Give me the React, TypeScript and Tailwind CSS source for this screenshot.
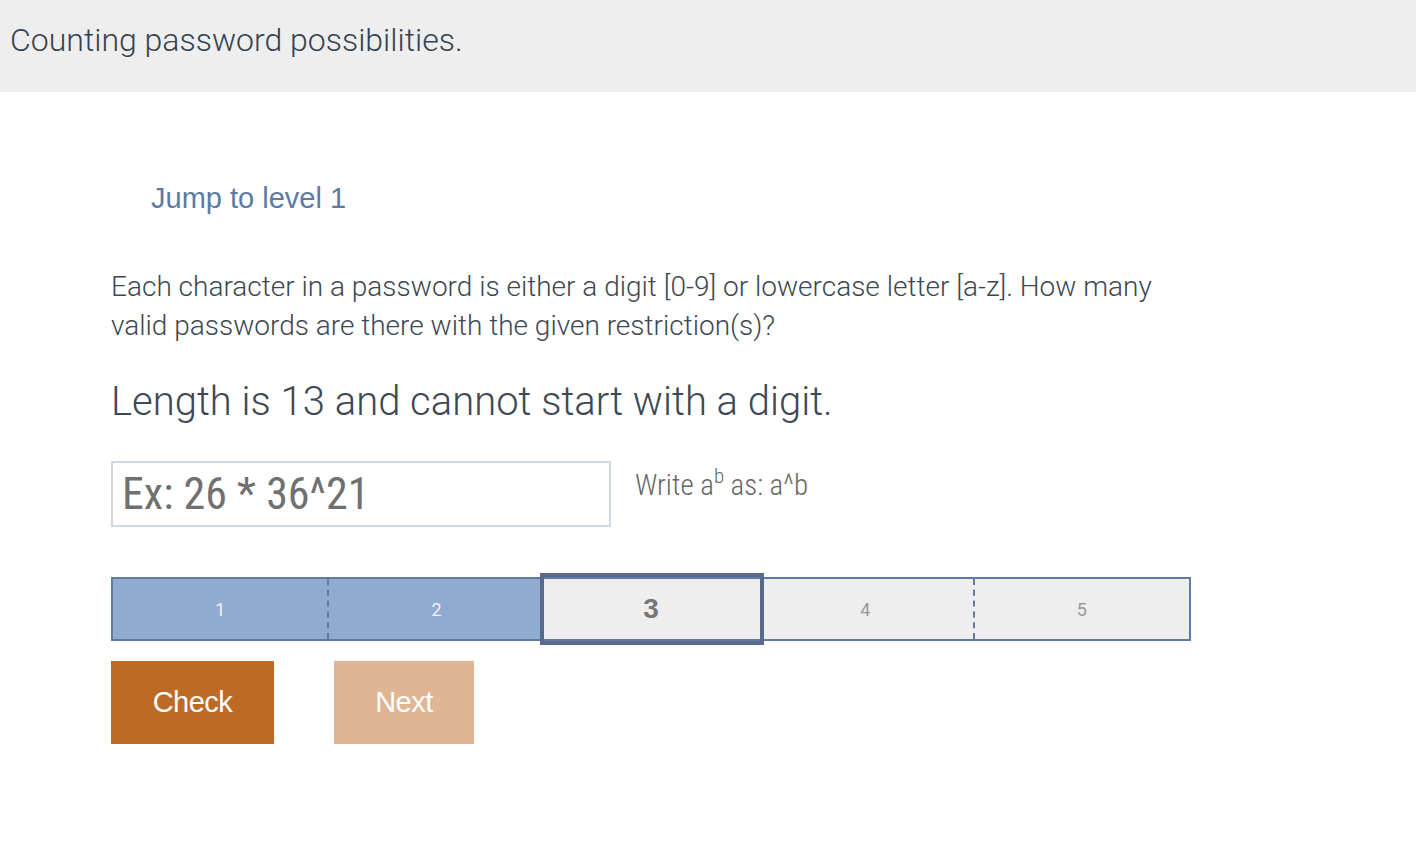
export default function App() {
  const roboto = { fontFamily: "Roboto, 'Noto Sans', sans-serif" };
  return (
    <div className="min-h-[856px] bg-white text-[#3d4852]" style={roboto}>
      <div className="h-[92px] bg-[#eeeeee] pl-[10px] pt-[20px]">
        <h1 className="text-[32px] leading-[40px] font-light text-[#36434e]">Counting password possibilities.</h1>
      </div>

      <div className="pl-[111px] w-[1200px]">
        <div className="pt-[88px] pl-[40px]">
          <a className="text-[29px] leading-[36px] text-[#5b7ba3] font-['Liberation_Sans',Arial,sans-serif]">
            Jump to level 1
          </a>
        </div>

        <p className="mt-[51px] text-[28px] leading-[39px] font-light text-[#3d4852]">
          Each character in a password is either a digit [0-9] or lowercase letter [a-z]. How many valid passwords are
          there with the given restriction(s)?
        </p>

        <h2 className="mt-[33px] text-[40px] leading-[48px] font-light text-[#3d4852]">
          Length is 13 and cannot start with a digit.
        </h2>

        <div className="mt-[35px] flex items-start gap-[24px]">
          <input
            placeholder="Ex: 26 * 36^21"
            className="w-[500px] h-[66px] border-2 border-[#cfd8dc] px-[9px] text-[44px] font-stretch-condensed placeholder:text-[#707070] outline-none"
          />
          <span className="mt-[6px] text-[29px] leading-[36px] font-light font-stretch-condensed text-[#666666]">
            Write a<sup className="text-[21px] -top-[12px]">b</sup> as: a^b
          </span>
        </div>

        <div className="mt-[50px] w-[1080px] h-[64px] flex border-2 border-[#5d7ca4]">
          <div className="flex-1 bg-[#8fabd0] flex items-center justify-center text-[18px] text-[#eef2f8] border-r-2 border-dashed border-[#5d7ca4]">
            1
          </div>
          <div className="flex-1 bg-[#8fabd0] flex items-center justify-center text-[18px] text-[#eef2f8]">2</div>
          <div className="flex-1 relative bg-[#eeeeee] flex items-center justify-center">
            <div className="absolute -top-[6px] -bottom-[6px] -left-[4px] -right-[6px] border-4 border-[#5a6a8a]" />
            <span className="text-[28px] font-bold text-[#777777] font-['Liberation_Sans',Arial,sans-serif]">3</span>
          </div>
          <div className="flex-1 bg-[#eeeeee] flex items-center justify-center text-[18px] text-[#999999] border-r-2 border-dashed border-[#5d7ca4]">
            4
          </div>
          <div className="flex-1 bg-[#eeeeee] flex items-center justify-center text-[18px] text-[#999999]">5</div>
        </div>

        <div className="mt-[20px] flex gap-[60px] font-['Liberation_Sans',Arial,sans-serif]">
          <button className="w-[163px] h-[83px] bg-[#bd6a27] text-white text-[29px] tracking-[-0.5px]">Check</button>
          <button className="w-[140px] h-[83px] bg-[#dfb593] text-white text-[29px] tracking-[-0.5px]">Next</button>
        </div>
      </div>
    </div>
  );
}
